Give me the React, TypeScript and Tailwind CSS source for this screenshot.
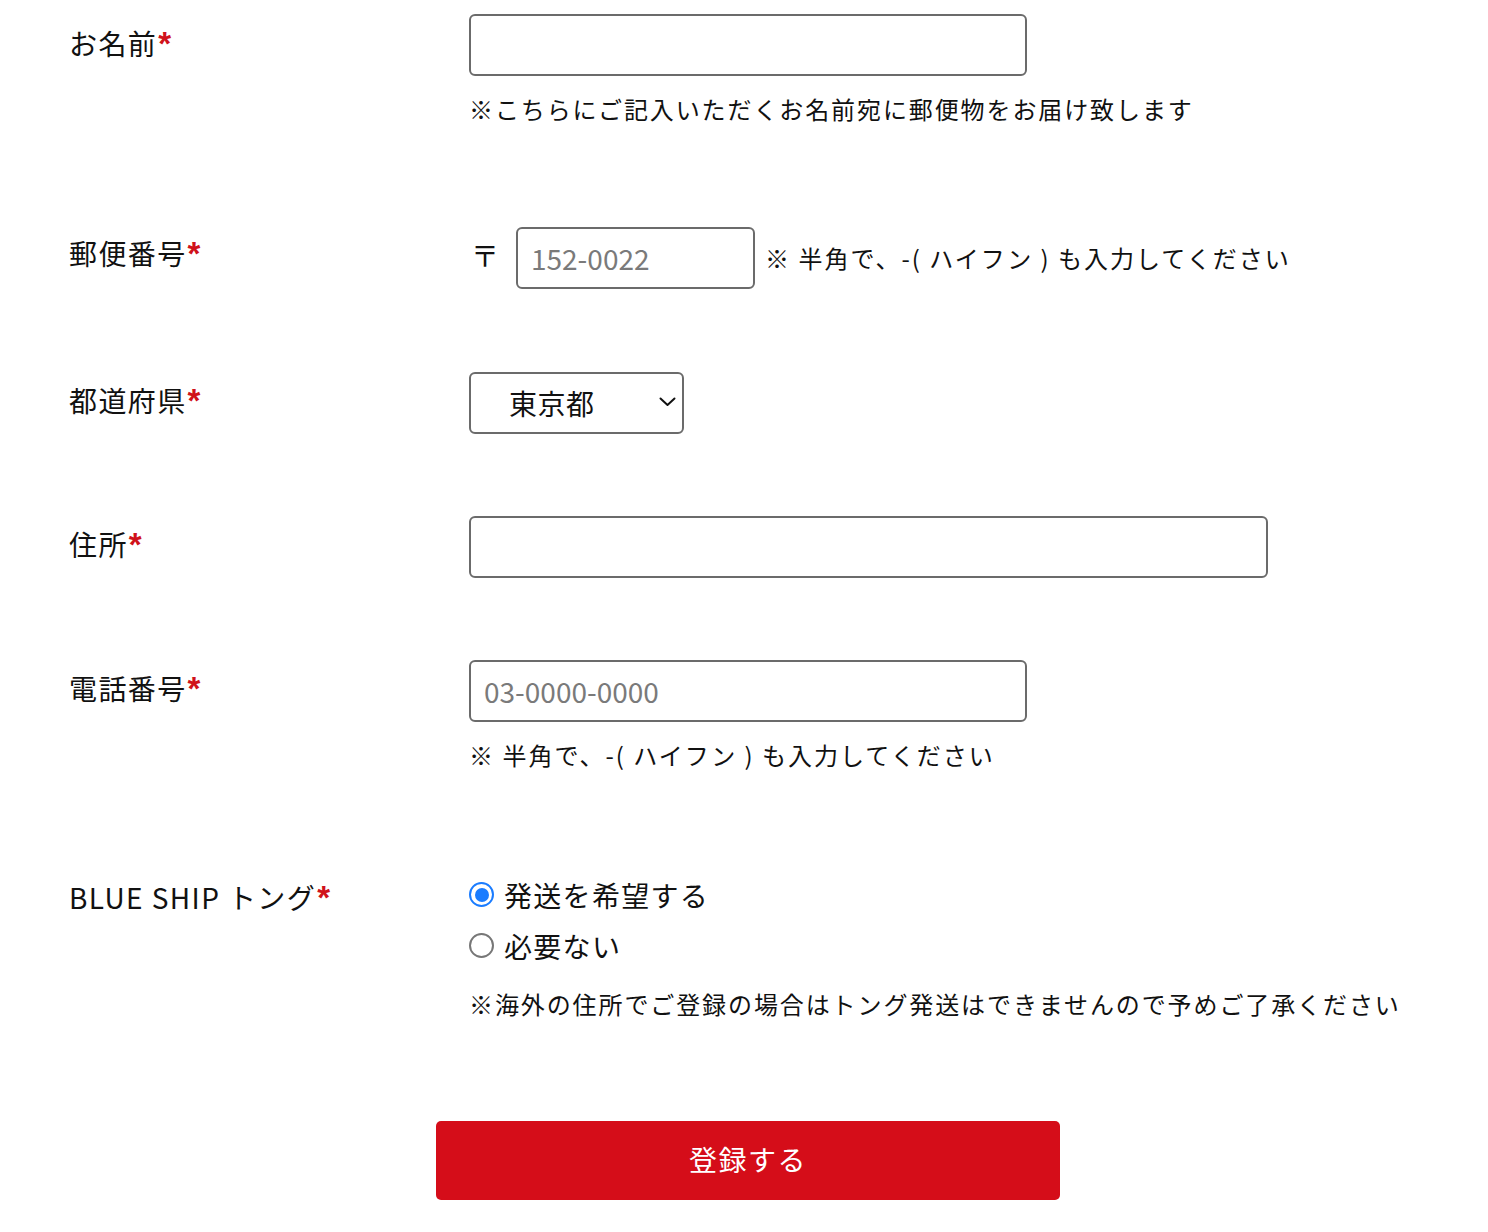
import React from 'react';

const font = { fontFamily: '"Noto Sans CJK JP", "Noto Sans", sans-serif' };

const Label: React.FC<{ text: string; pt: string }> = ({ text, pt }) => (
  <div className={`${pt} text-[28px] leading-[40px] tracking-[1.4px] text-[#111]`}>
    {text}
    <span className="ml-[1px] font-['Liberation_Sans',sans-serif] text-[33px] leading-[30px] font-bold text-[#d0121b]">*</span>
  </div>
);

const inputCls =
  'h-[62px] rounded-[6px] border-2 border-[#6b6b6b] bg-white px-[13px] text-[28px] text-[#222] placeholder:text-[#7a7a7a] outline-none';

const Radio: React.FC<{ checked?: boolean; label: string }> = ({ checked, label }) => (
  <label className="flex h-[51px] items-center">
    {checked ? (
      <span className="flex h-[25px] w-[25px] items-center justify-center rounded-full border-[2.5px] border-[#1a7cff] bg-white">
        <span className="h-[14px] w-[14px] rounded-full bg-[#1a7cff]" />
      </span>
    ) : (
      <span className="h-[25px] w-[25px] rounded-full border-2 border-[#777] bg-white" />
    )}
    <span className="ml-[10px] text-[28px] leading-[40px] tracking-[1.3px] text-[#111]">{label}</span>
  </label>
);

const App: React.FC = () => {
  return (
    <div className="min-h-[1232px] w-[1488px] bg-white" style={font}>
      <form className="pl-[69px]" onSubmit={(e) => e.preventDefault()}>
        {/* お名前 */}
        <div className="grid grid-cols-[400px_1fr] pt-[14px]">
          <Label text="お名前" pt="pt-[9px]" />
          <div>
            <input type="text" className={`${inputCls} w-[558px]`} />
            <p className="mt-[15px] text-[24px] leading-[36px] tracking-[1.9px] text-[#111]">
              ※こちらにご記入いただくお名前宛に郵便物をお届け致します
            </p>
          </div>
        </div>

        {/* 郵便番号 */}
        <div className="mt-[100px] grid grid-cols-[400px_1fr]">
          <Label text="郵便番号" pt="pt-[6px]" />
          <div className="flex items-center">
            <span className="-mt-[6px] w-[47px] pl-[2px] text-[28px] leading-[40px] text-[#111]">〒</span>
            <input type="text" placeholder="152-0022" className={`${inputCls} w-[239px]`} />
            <span className="ml-[10px] text-[24px] leading-[36px] tracking-[2px] text-[#111]">
              ※ 半角で、-( ハイフン ) も入力してください
            </span>
          </div>
        </div>

        {/* 都道府県 */}
        <div className="mt-[83px] grid grid-cols-[400px_1fr]">
          <Label text="都道府県" pt="pt-[8px]" />
          <div>
            <div className="relative h-[62px] w-[215px]">
              <select
                defaultValue="東京都"
                className="h-full w-full appearance-none rounded-[6px] border-2 border-[#6b6b6b] bg-white pl-[38px] text-[28px] tracking-[0.5px] text-[#111] outline-none"
              >
                <option>北海道</option>
                <option>神奈川県</option>
                <option>東京都</option>
                <option>大阪府</option>
              </select>
              <svg
                className="pointer-events-none absolute right-[8px] top-[25px]"
                width="17"
                height="10"
                viewBox="0 0 17 10"
                fill="none"
              >
                <path d="M1.5 1.5 L8.5 8 L15.5 1.5" stroke="#111" strokeWidth="2" strokeLinecap="round" strokeLinejoin="round" />
              </svg>
            </div>
          </div>
        </div>

        {/* 住所 */}
        <div className="mt-[82px] grid grid-cols-[400px_1fr]">
          <Label text="住所" pt="pt-[8px]" />
          <div>
            <input type="text" className={`${inputCls} w-[799px]`} />
          </div>
        </div>

        {/* 電話番号 */}
        <div className="mt-[82px] grid grid-cols-[400px_1fr]">
          <Label text="電話番号" pt="pt-[8px]" />
          <div>
            <input type="text" placeholder="03-0000-0000" className={`${inputCls} w-[558px]`} />
            <p className="mt-[15px] text-[24px] leading-[36px] tracking-[2px] text-[#111]">
              ※ 半角で、-( ハイフン ) も入力してください
            </p>
          </div>
        </div>

        {/* BLUE SHIP トング */}
        <div className="mt-[96px] grid grid-cols-[400px_1fr]">
          <Label text="BLUE SHIP トング" pt="pt-[8px]" />
          <div>
            <Radio checked label="発送を希望する" />
            <Radio label="必要ない" />
            <p className="mt-[15px] text-[24px] leading-[36px] tracking-[1.9px] text-[#111]">
              ※海外の住所でご登録の場合はトング発送はできませんので予めご了承ください
            </p>
          </div>
        </div>

        <button
          type="submit"
          className="mb-[32px] ml-[367px] mt-[99px] flex h-[79px] w-[624px] items-center justify-center rounded-[5px] bg-[#d50d19] pb-[4px] text-[28px] tracking-[1.5px] text-white"
        >
          登録する
        </button>
      </form>
    </div>
  );
};

export default App;
